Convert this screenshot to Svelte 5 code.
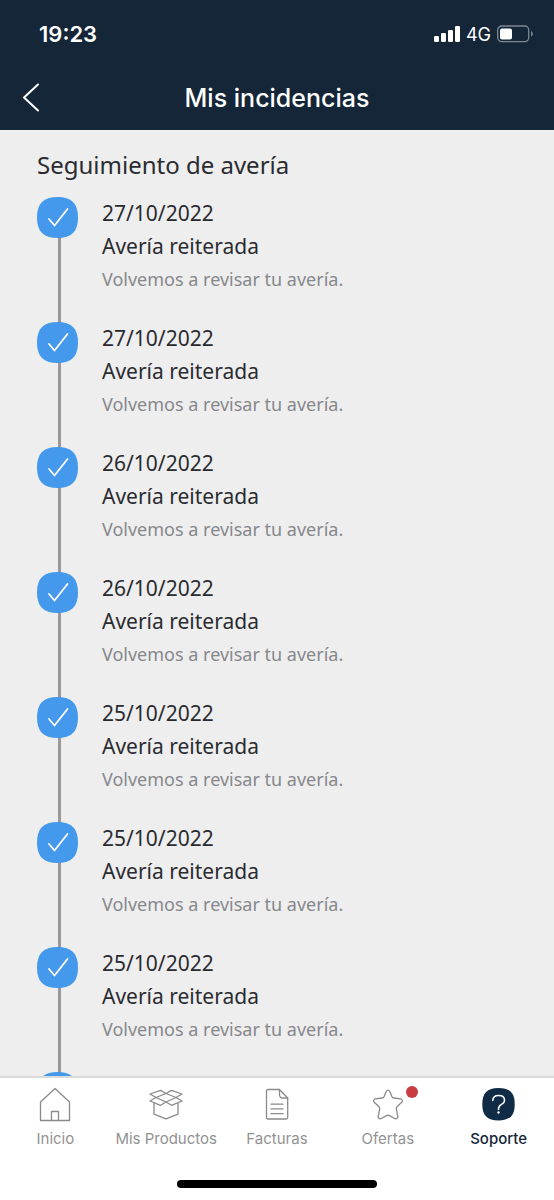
<script>
  const steps = [
    { date: '27/10/2022' },
    { date: '27/10/2022' },
    { date: '26/10/2022' },
    { date: '26/10/2022' },
    { date: '25/10/2022' },
    { date: '25/10/2022' },
    { date: '25/10/2022' },
    { date: '24/10/2022' }
  ];

  const tabs = [
    { id: 'home', label: 'Inicio' },
    { id: 'box', label: 'Mis Productos' },
    { id: 'bill', label: 'Facturas' },
    { id: 'star', label: 'Ofertas', badge: true },
    { id: 'help', label: 'Soporte' }
  ];

  let active = $state('help');
</script>

<div class="screen">
  <header>
    <div class="status">
      <span class="time">19:23</span>
      <div class="signal">
        <svg width="26" height="16" viewBox="0 0 26 16" fill="#fff">
          <rect x="0" y="10" width="5" height="6" rx="1.3" />
          <rect x="7" y="7" width="5" height="9" rx="1.3" />
          <rect x="14" y="4" width="5" height="12" rx="1.3" />
          <rect x="21" y="0" width="5" height="16" rx="1.3" />
        </svg>
        <span class="net">4G</span>
        <svg width="36" height="18" viewBox="0 0 36 18">
          <rect x="0.7" y="1" width="31" height="15.6" rx="4" fill="none" stroke="#7c8791" stroke-width="1.3" />
          <rect x="3" y="3.4" width="12" height="11" rx="2" fill="#fff" />
          <path d="M34 6v5.6c1-.5 1.8-1.5 1.8-2.8S35 6.5 34 6z" fill="#7c8791" />
        </svg>
      </div>
    </div>
    <div class="bar">
      <button class="back" aria-label="Volver">
        <svg width="18" height="30" viewBox="0 0 18 30" fill="none" stroke="#fff" stroke-width="2" stroke-linecap="round" stroke-linejoin="round">
          <path d="M16 1.500L2 14.500l14 13" />
        </svg>
      </button>
      <h1>Mis incidencias</h1>
    </div>
  </header>

  <main>
    <h2>Seguimiento de avería</h2>
    <ol>
      {#each steps as step}
        <li>
          <div class="rail">
            <svg width="42" height="42" viewBox="0 0 42 42" fill="none">
              <path d="M20.500 0C34.500 0 41 6.500 41 20.500S34.500 41 20.500 41 0 34.500 0 20.500 6.500 0 20.500 0z" fill="#4499ed" />
              <path d="M12 22l5.500 6.500L30.500 12" stroke="#fff" stroke-width="1.8" stroke-linecap="round" stroke-linejoin="round" />
            </svg>
          </div>
          <div class="info">
            <time>{step.date}</time>
            <h3>Avería reiterada</h3>
            <p>Volvemos a revisar tu avería.</p>
          </div>
        </li>
      {/each}
    </ol>
  </main>

  <nav>
    <div class="tabs">
      {#each tabs as tab}
        <button class="tab" class:active={active === tab.id} onclick={() => (active = tab.id)}>
          <span class="icon">
            <svg width="34" height="36" viewBox="0 0 34 36" fill="none" stroke="#8a8a8a" stroke-width="1.3" stroke-linejoin="round" stroke-linecap="round">
              {#if tab.id === 'home'}
                <path d="M2.500 15L17 1.500 31.500 15v18.500h-29z" />
                <path d="M13.500 33.500v-9h7v9" />
              {:else if tab.id === 'box'}
                <path d="M1 7L11.500 3.400 17 6.500 7 10.500zM33 7L22.500 3.400 17 6.500 27 10.500z" />
                <path d="M1 14L7 10.500 17 15l-5.500 3.300zM33 14L27 10.500 17 15l5.500 3.300z" />
                <path d="M5 16.300v10.900L17 31.800l12-4.600V16.300" />
              {:else if tab.id === 'bill'}
                <path d="M8 2.500H19.500l8.200 8.500v19.500q0 1.500-1.500 1.500H8q-1.500 0-1.500-1.500V4Q6.500 2.500 8 2.500z" />
                <path d="M19.500 2.500v5q0 3.500 3.500 3.500h4.700" />
                <path d="M11 17.200h12M11 21.900h12M11 26.700h12" />
              {:else if tab.id === 'star'}
                <path d="M15.200 4.500Q17 1.900 18.800 4.500L21 9.700Q21.500 10.900 22.800 11L29.500 11.900Q32.500 12.700 30.800 15.200L26 19.700Q25.100 20.600 25.300 21.800L26.800 29.300Q26.700 32.500 23.700 31.500L18.500 28.600Q17 27.900 15.500 28.600L10.300 31.500Q7.300 32.500 7.200 29.300L8.700 21.800Q8.900 20.600 8 19.700L3.200 15.200Q1.500 12.700 4.500 11.900L11.200 11Q12.500 10.900 13 9.700z" />
              {:else}
                <path d="M16.500 1C28 1 32.700 6 32.700 17.200S28 33.400 16.500 33.400 .3 28.400 .3 17.200 5 1 16.500 1z" fill="#0f2b45" stroke="none" />
                <path d="M10.800 13.500q0-5 5.900-5 5.800 0 5.800 4.700 0 2.500-3 4.200-3 1.700-3 4.600v.5" stroke="#fff" stroke-width="1.5" />
                <circle cx="16.500" cy="25.500" r="1.200" fill="#fff" stroke="none" />
              {/if}
            </svg>
            {#if tab.badge}<span class="badge"></span>{/if}
          </span>
          <span>{tab.label}</span>
        </button>
      {/each}
    </div>
    <div class="home-bar"></div>
  </nav>
</div>

<style>
  :global(body) {
    margin: 0;
  }

  .screen {
    display: flex;
    flex-direction: column;
    height: 100vh;
    background: #eee;
    font-family: 'Noto Sans', sans-serif;
    color: #2a2b30;
  }

  header {
    flex: none;
    background: #142638;
    color: #fff;
    font-family: Inter, sans-serif;
  }

  .status {
    display: flex;
    align-items: center;
    justify-content: space-between;
    height: 68px;
    padding: 0 21px 0 39px;
  }

  .time {
    font-size: 22px;
    font-weight: 600;
  }

  .signal {
    display: flex;
    align-items: center;
    gap: 6px;
  }

  .net {
    font-size: 18px;
    font-weight: 400;
  }

  .bar {
    display: grid;
    grid-template-columns: 64px 1fr 64px;
    align-items: center;
    height: 60px;
    padding-bottom: 2px;
  }

  .back {
    display: flex;
    padding: 0 0 0 22px;
    border: 0;
    background: none;
    cursor: pointer;
  }

  h1 {
    margin: 0;
    text-align: center;
    font-size: 25px;
    font-weight: 500;
  }

  main {
    flex: 1;
    min-height: 0;
    overflow: hidden;
    padding: 17px 37px 0;
  }

  h2 {
    margin: 0 0 14px;
    font-size: 24px;
    line-height: 36px;
    font-weight: 400;
  }

  ol {
    margin: 0;
    padding: 0;
    list-style: none;
  }

  li {
    display: flex;
    gap: 23px;
    height: 125px;
  }

  /* vertical line runs behind each check mark */
  .rail {
    width: 42px;
    background: linear-gradient(#999, #999) 21px 0 / 3px 100% no-repeat;
  }

  .rail svg {
    display: block;
  }

  time,
  h3,
  p {
    display: block;
    margin: 0;
    font-weight: 400;
  }

  time,
  h3 {
    font-size: 21px;
    line-height: 33px;
  }

  p {
    font-size: 18px;
    line-height: 33px;
    color: #87888c;
  }

  nav {
    flex: none;
    background: #fff;
    border-top: 2px solid #d9dada;
    font-family: Inter, sans-serif;
  }

  .tabs {
    display: flex;
    padding-top: 9px;
  }

  .tab {
    flex: 1 1 0;
    display: flex;
    flex-direction: column;
    align-items: center;
    gap: 6px;
    padding: 0;
    border: 0;
    background: none;
    font-family: inherit;
    font-size: 15px;
    line-height: 20px;
    font-weight: 400;
    color: #929292;
    white-space: nowrap;
    cursor: pointer;
  }

  .tab.active {
    color: #142638;
    font-weight: 500;
  }

  .icon {
    position: relative;
    display: flex;
  }

  .badge {
    position: absolute;
    top: -1px;
    right: -13px;
    width: 12px;
    height: 12px;
    border-radius: 50%;
    background: #c93c43;
  }

  .home-bar {
    width: 36%;
    height: 8px;
    margin: 31px auto 12px;
    border-radius: 4px;
    background: #000;
  }
</style>
